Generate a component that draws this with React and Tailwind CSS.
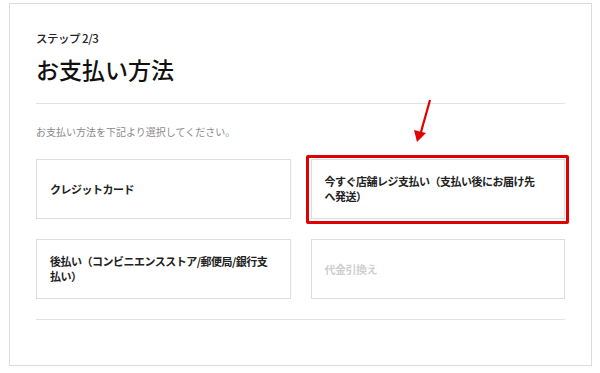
import React from "react";

const font = { fontFamily: '"Noto Sans CJK JP", "Noto Sans", sans-serif' };

function Option({ label, disabled, textWidth = "" }) {
    return (
        <div className="h-[60px] border border-[#dedede] bg-white flex items-center px-[13px]">
            <span
                className={
                    "text-[11px] leading-[15px] font-bold tracking-[-0.5px] " +
                    textWidth +
                    (disabled ? " text-[#cfcfcf]" : " text-[#222]")
                }
            >
                {label}
            </span>
        </div>
    );
}

export default function App() {
    return (
        <div className="w-[600px] h-[373px] bg-white pt-[3px] pl-[9px]" style={font}>
            <div className="relative w-[583px] h-[363px] border border-[#dcdcdc] px-[26px]">
                {/* header */}
                <div className="pt-[26px] text-[11.5px] leading-[16px] font-medium tracking-[-0.5px] text-[#222]">ステップ 2/3</div>
                <h1 className="mt-[9px] text-[23px] leading-[28px] font-medium text-[#111]">お支払い方法</h1>
                <div className="mt-[20px] border-t border-[#e2e2e2]" />

                <p className="mt-[21px] text-[10px] leading-[14px] text-[#8a8a8a]">
                    お支払い方法を下記より選択してください。
                </p>

                {/* options */}
                <div className="mt-[20px] grid grid-cols-2 gap-x-[20px] gap-y-[20px]">
                    <Option label="クレジットカード" />
                    <div className="relative">
                        <Option label="今すぐ店舗レジ支払い（支払い後にお届け先へ発送）" textWidth="max-w-[216px]" />
                        <div className="absolute left-[-5px] right-[-4px] top-[-4px] bottom-[-5px] border-[3px] border-[#e00000] rounded-[2px]" />
                    </div>
                    <Option label="後払い（コンビニエンスストア/郵便局/銀行支払い）" />
                    <Option label="代金引換え" disabled />
                </div>

                <div className="mt-[20px] border-t border-[#e2e2e2]" />

                {/* annotation arrow */}
                <svg className="absolute left-[395px] top-[94px]" width="30" height="46" viewBox="0 0 30 46">
                    <line x1="25" y1="2" x2="16" y2="34" stroke="#e00000" strokeWidth="2.2" />
                    <polygon points="9,32 21,35 12,44" fill="#e00000" />
                </svg>
            </div>
        </div>
    );
}
